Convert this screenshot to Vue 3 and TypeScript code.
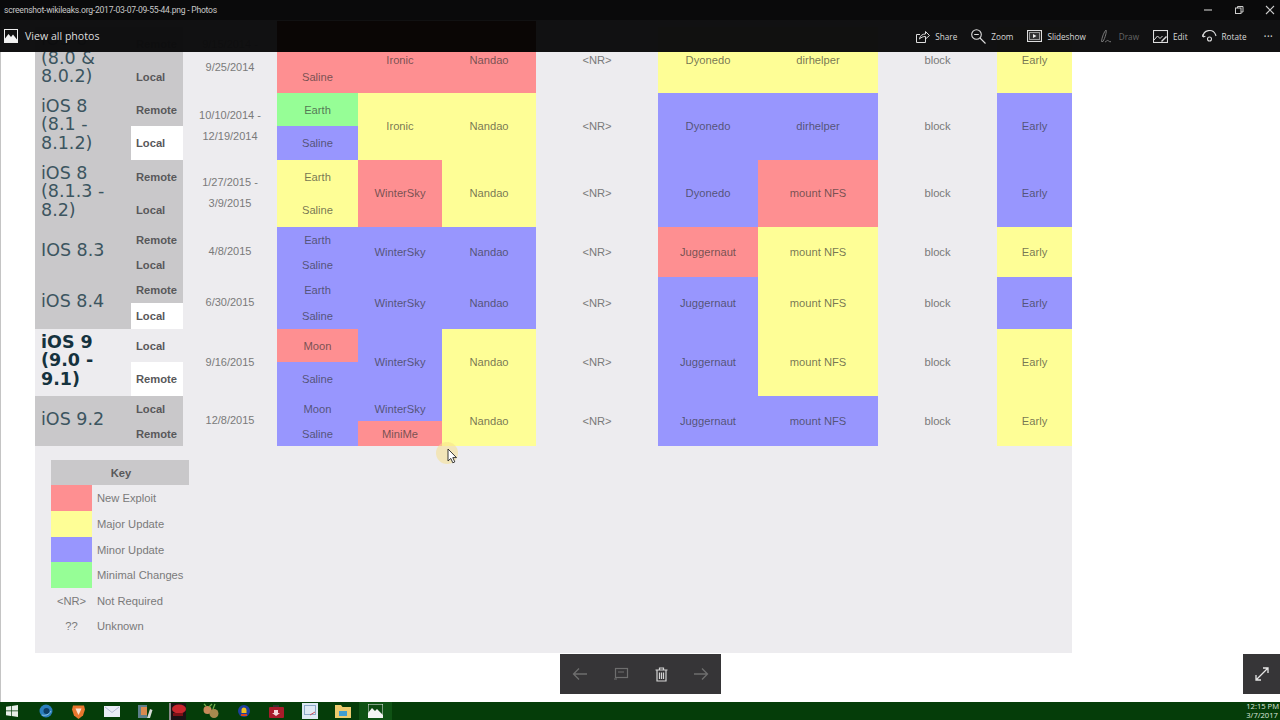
<script setup lang="ts">
type Cell = { t: string; c: string; rs?: number };
type Pair = [string, string];

const pink = 'pink';
const yel = 'yel';
const blue = 'blue';
const green = 'green';

// each os version takes two rows, remote + local
const pair = (
  version: string,
  vCls: string,
  date: string,
  first: Pair,
  second: Pair,
  a: Pair[],
  b: Pair[],
  c: string,
  d: Pair,
  e: Pair,
  f: string,
  h: [number, number],
  dateCls = ''
) => {
  const top: Cell[] = [
    { t: version, c: 'ver ' + vCls, rs: 2 },
    { t: first[0], c: 'type ' + first[1] },
    { t: date, c: 'date ' + dateCls, rs: 2 },
    { t: a[0][0], c: a[0][1], rs: a.length === 1 ? 2 : 1 },
    { t: b[0][0], c: b[0][1], rs: b.length === 1 ? 2 : 1 },
    { t: 'Nandao', c, rs: 2 },
    { t: '<NR>', c: 'plain', rs: 2 },
    { t: d[0], c: d[1], rs: 2 },
    { t: e[0], c: e[1], rs: 2 },
    { t: 'block', c: 'plain', rs: 2 },
    { t: 'Early', c: f, rs: 2 }
  ];
  const bottom: Cell[] = [{ t: second[0], c: 'type ' + second[1] }];
  if (a[1]) bottom.push({ t: a[1][0], c: a[1][1] });
  if (b[1]) bottom.push({ t: b[1][0], c: b[1][1] });
  return [
    { h: h[0], cells: top },
    { h: h[1], cells: bottom }
  ];
};

const rows = [
  ...pair('iOS 8\n(8.0 &\n8.0.2)', 'gray', '9/15/2014 -\n9/25/2014', ['Remote', 'gray'], ['Local', 'gray'],
    [['Earth', pink], ['Saline', pink]], [['Ironic', pink]], pink, ['Dyonedo', yel], ['dirhelper', yel], yel, [33, 33], 'first'),
  ...pair('iOS 8\n(8.1 -\n8.1.2)', 'gray', '10/10/2014 -\n12/19/2014', ['Remote', 'gray'], ['Local', 'white'],
    [['Earth', green], ['Saline', blue]], [['Ironic', yel]], yel, ['Dyonedo', blue], ['dirhelper', blue], blue, [33, 34]),
  ...pair('iOS 8\n(8.1.3 -\n8.2)', 'gray', '1/27/2015 -\n3/9/2015', ['Remote', 'gray'], ['Local', 'gray'],
    [['Earth', yel], ['Saline', yel]], [['WinterSky', pink]], yel, ['Dyonedo', blue], ['mount NFS', pink], blue, [33, 34]),
  ...pair('IOS 8.3', 'gray', '4/8/2015', ['Remote', 'gray'], ['Local', 'gray'],
    [['Earth', blue], ['Saline', blue]], [['WinterSky', blue]], blue, ['Juggernaut', pink], ['mount NFS', yel], yel, [25, 25]),
  ...pair('iOS 8.4', 'gray', '6/30/2015', ['Remote', 'gray'], ['Local', 'white'],
    [['Earth', blue], ['Saline', blue]], [['WinterSky', blue]], blue, ['Juggernaut', blue], ['mount NFS', yel], blue, [26, 26]),
  ...pair('iOS 9\n(9.0 -\n9.1)', 'bold', '9/16/2015', ['Local', ''], ['Remote', 'white'],
    [['Moon', pink], ['Saline', blue]], [['WinterSky', blue]], yel, ['Juggernaut', blue], ['mount NFS', yel], yel, [33, 34]),
  ...pair('iOS 9.2', 'gray', '12/8/2015', ['Local', 'gray'], ['Remote', 'gray'],
    [['Moon', blue], ['Saline', blue]], [['WinterSky', blue], ['MiniMe', pink]], yel, ['Juggernaut', blue], ['mount NFS', blue], yel, [25, 25])
];

const legend = [
  { sw: pink, t: '', label: 'New Exploit', h: 26 },
  { sw: yel, t: '', label: 'Major Update', h: 26 },
  { sw: blue, t: '', label: 'Minor Update', h: 25 },
  { sw: green, t: '', label: 'Minimal Changes', h: 26 },
  { sw: 'plain', t: '<NR>', label: 'Not Required', h: 25 },
  { sw: 'plain', t: '??', label: 'Unknown', h: 26 }
];
</script>

<template>
  <div class="screen">
    <div class="viewer">
      <div class="panel">
        <table class="matrix">
          <colgroup>
            <col v-for="w in [96, 52, 94, 81, 84, 94, 122, 100, 120, 119, 75]" :key="w" :style="{ width: w + 'px' }" />
          </colgroup>
          <tbody>
            <tr v-for="(row, i) in rows" :key="i" :style="{ height: row.h + 'px' }">
              <td v-for="(cell, j) in row.cells" :key="j" :class="cell.c" :rowspan="cell.rs || 1">{{ cell.t }}</td>
            </tr>
          </tbody>
        </table>

        <table class="legend">
          <colgroup>
            <col class="col-swatch" />
            <col />
          </colgroup>
          <thead>
            <tr>
              <th colspan="2">Key</th>
            </tr>
          </thead>
          <tbody>
            <tr v-for="item in legend" :key="item.label" :style="{ height: item.h + 'px' }">
              <td class="swatch" :class="item.sw">{{ item.t }}</td>
              <td class="label">{{ item.label }}</td>
            </tr>
          </tbody>
        </table>
      </div>
    </div>

    <!-- photos app chrome, lies over the page -->
    <header class="chrome">
      <div class="ghost"></div>
      <div class="titlebar">
        <span class="title">screenshot-wikileaks.org-2017-03-07-09-55-44.png - Photos</span>
        <div class="winctl">
          <svg width="10" height="10" viewBox="0 0 10 10"><path d="M1 5h8" stroke="#bbb" stroke-width="1.2" /></svg>
          <svg width="10" height="10" viewBox="0 0 10 10" fill="none" stroke="#ccc"><rect x="1.5" y="3" width="5.5" height="5.5" /><path d="M3.5 3V1.5H9V7H7" /></svg>
          <svg width="10" height="10" viewBox="0 0 10 10"><path d="M1 1l8 8M9 1l-8 8" stroke="#ccc" stroke-width="1.1" /></svg>
        </div>
      </div>
      <div class="toolbar">
        <div class="allphotos">
          <svg width="14" height="14" viewBox="0 0 14 14">
            <rect x=".5" y=".5" width="13" height="13" fill="#111" stroke="#eee" />
            <path d="M1 13V9.5L4.5 5 7 8l2-2.500 4 5V13z" fill="#f2f2f2" />
          </svg>
          <span>View all photos</span>
        </div>
        <div class="actions">
          <div class="act">
            <svg width="15" height="15" viewBox="0 0 15 15" fill="none" stroke="#ddd"><path d="M5 5.500H1.500v8h9V10" /><path d="M4.500 10c.5-3.500 3-5 6-5V2.500l4 4-4 3.500V7.500c-2.500 0-4.500.8-6 2.500z" /></svg>
            <span>Share</span>
          </div>
          <div class="act">
            <svg width="15" height="15" viewBox="0 0 15 15" fill="none" stroke="#ddd" stroke-width="1.100"><circle cx="5.500" cy="5.500" r="4.800" /><path d="M3.200 5.500h4.600M9 9l5.500 5.500" /></svg>
            <span>Zoom</span>
          </div>
          <div class="act">
            <svg width="15" height="12" viewBox="0 0 15 12" fill="none" stroke="#ddd"><rect x=".5" y=".5" width="14" height="11" stroke-width="1.200" /><rect x="2.500" y="2.500" width="10" height="7" fill="#333" stroke="#999" /><path d="M6 4l3.500 2L6 8z" fill="#eee" stroke="none" /></svg>
            <span>Slideshow</span>
          </div>
          <div class="act off">
            <svg width="14" height="15" viewBox="0 0 14 15" fill="none" stroke="#777"><path d="M1.500 12.500C2 8 4 3 6 1c1 1.500-1 8-3 11.500zM5 13c1.500-.5 2-2 3-1.500s1 1.500 3 1.200" /></svg>
            <span>Draw</span>
          </div>
          <div class="act">
            <svg width="15" height="13" viewBox="0 0 15 13" fill="none" stroke="#ddd"><rect x=".5" y=".5" width="14" height="12" stroke-width="1.100" /><path d="M1 10l3.500-4L7 8.500 9.500 6" /><path d="M8 11l5-5 1 1-5 5z" fill="#ddd" stroke="none" /></svg>
            <span>Edit</span>
          </div>
          <div class="act">
            <svg width="15" height="15" viewBox="0 0 15 15" fill="none" stroke="#ddd" stroke-width="1.100"><path d="M1 8a6.500 6.500 0 0 1 12.500-2.500L14 7" /><circle cx="7.500" cy="10" r="2" /><path d="M1 8l-.5-2.500M1 8l2.400-.8" /></svg>
            <span>Rotate</span>
          </div>
          <span class="more">···</span>
        </div>
      </div>
    </header>

    <nav class="floatnav">
      <svg width="16" height="14" viewBox="0 0 16 14" fill="none" stroke="#6e6e6e" stroke-width="1.300"><path d="M15 7H1.500M7 1.500L1.500 7 7 12.500" /></svg>
      <svg width="16" height="14" viewBox="0 0 16 14" fill="none" stroke="#6e6e6e" stroke-width="1.200"><rect x="2.500" y="1.500" width="12" height="9" /><path d="M5 5h6M1 12h3" /></svg>
      <svg width="13" height="15" viewBox="0 0 13 15" fill="none" stroke="#d4d4d4" stroke-width="1.200"><path d="M.5 3h12M4.500 3V1h4v2M2 3v11h9V3M4.500 5.500V12M6.500 5.500V12M8.500 5.500V12" /></svg>
      <svg width="16" height="14" viewBox="0 0 16 14" fill="none" stroke="#6e6e6e" stroke-width="1.300"><path d="M1 7h13.500M9 1.500L14.500 7 9 12.500" /></svg>
    </nav>

    <button class="expand" aria-label="Full screen">
      <svg width="14" height="14" viewBox="0 0 14 14" fill="none" stroke="#e6e6e6" stroke-width="1.300"><path d="M1 13L13 1M8 1h5v5M1 8v5h5" /></svg>
    </button>

    <!-- screen recorder pointer -->
    <div class="pointer">
      <svg width="24" height="28" viewBox="0 0 24 28">
        <circle cx="11" cy="11" r="11" fill="#f5e08c" opacity=".55" />
        <path d="M12 7v12l2.800-2.600 2 4.400 2-.9-2-4.300h3.700z" fill="#fff" stroke="#222" stroke-width=".9" />
      </svg>
    </div>

    <footer class="taskbar">
      <div class="start">
        <svg width="12" height="12" viewBox="0 0 12 12" fill="#e8efe8"><path d="M0 1.700L5 1v4.500H0zM5.700.9L12 0v5.500H5.700zM0 6.200h5v4.700l-5-.7zM5.700 6.200H12V12l-6.300-.9z" /></svg>
      </div>
      <div class="slot">
        <svg width="14" height="14" viewBox="0 0 14 14"><circle cx="7" cy="7" r="6.500" fill="#2b7fbd" /><circle cx="7.500" cy="7" r="3" fill="#0f3f66" /><path d="M3 11c3 1 7 0 9-4" stroke="#8fc4e6" fill="none" /></svg>
      </div>
      <div class="slot">
        <svg width="13" height="15" viewBox="0 0 13 15"><path d="M1 1.500h11l1 4-2 6-4.500 3.500L2 11.500 0 5.500z" fill="#e8772e" /><path d="M3.500 4.500h6L8 8 6.500 11 5 8z" fill="#fbe3cf" /></svg>
      </div>
      <div class="slot">
        <svg width="16" height="11" viewBox="0 0 16 11"><rect width="16" height="11" fill="#e9ecf6" /><path d="M1 1l7 5.500L15 1" fill="none" stroke="#b6bbd6" /></svg>
      </div>
      <div class="slot">
        <svg width="16" height="15" viewBox="0 0 16 15"><rect x="1" y="1" width="9" height="13" fill="#5d7f8a" /><rect x="4" y="3" width="6" height="8" fill="#d98a4f" /><path d="M10 14l3-9 2.500 1-2.500 8z" fill="#d8dcd8" /></svg>
      </div>
      <div class="slot">
        <svg width="17" height="17" viewBox="0 0 17 17"><rect width="17" height="17" fill="#1c1214" /><rect width="2" height="17" fill="#8a8a8a" /><ellipse cx="10" cy="6" rx="7" ry="4.500" fill="#c9262c" /><rect x="4" y="10" width="10" height="3" fill="#7d1116" /></svg>
      </div>
      <div class="slot">
        <svg width="16" height="16" viewBox="0 0 16 16"><circle cx="4.500" cy="7" r="4" fill="#c98a5a" /><circle cx="11" cy="10.500" r="4.500" fill="#a88a4e" /><path d="M10 6l2-5M3 3L1 1M6 4l3-3" stroke="#6fae4a" stroke-width="1.300" /></svg>
      </div>
      <div class="slot">
        <svg width="14" height="14" viewBox="0 0 14 14"><circle cx="7" cy="7" r="6" fill="#1d3f9e" /><path d="M4.500 9V6a2.500 2.500 0 0 1 5 0v3z" fill="#f2c21f" /><rect x="4" y="10" width="6" height="2" fill="#d6471f" /></svg>
      </div>
      <div class="slot">
        <svg width="15" height="13" viewBox="0 0 15 13"><rect y="2" width="15" height="11" rx="1" fill="#a81c2a" /><path d="M5 5h4v3h2l-4 3-4-3h2z" fill="#f4d8da" /><rect x="4" width="6" height="2" fill="#333" /></svg>
      </div>
      <div class="slot">
        <svg width="16" height="16" viewBox="0 0 16 16"><rect width="16" height="16" fill="#dfe9f4" /><rect x="2.500" y="2.500" width="11" height="9" fill="none" stroke="#8fa9c9" /><path d="M8 12l5-3" stroke="#d0505a" /></svg>
      </div>
      <div class="slot">
        <svg width="16" height="14" viewBox="0 0 16 14"><path d="M0 1h6l1.500 2H16v11H0z" fill="#eccb6e" /><rect x="4" y="7" width="8" height="5" fill="#3f9dd1" /></svg>
      </div>
      <div class="slot active">
        <svg width="15" height="14" viewBox="0 0 15 14"><rect width="15" height="14" fill="#0d4a12" stroke="#f0f0f0" /><path d="M0 14V9l4-5 3 3 2-2 6 6v3z" fill="#f4f4f4" /></svg>
      </div>
      <div class="clock">12:15 PM<br />3/7/2017</div>
    </footer>
  </div>
</template>

<style scoped>
.screen {
  position: relative;
  width: 1280px;
  height: 720px;
  overflow: hidden;
  display: flex;
  flex-direction: column;
  background: #fff;
  font-family: "Liberation Sans", Arial, sans-serif;
}

.viewer {
  flex: 1;
  min-height: 0;
  padding-left: 35px;
  box-shadow: inset 1px 0 0 #c4c4c4;
}

.panel {
  width: 1037px;
  height: 653px;
  padding-top: 27px;
  box-sizing: border-box;
  background: #edecef;
}

/* --- main table --- */
.matrix {
  width: 1037px;
  table-layout: fixed;
  border-collapse: collapse;
  font-size: 11.2px;
  color: rgba(50, 50, 50, 0.68);
}

.matrix td {
  padding: 0;
  text-align: center;
  vertical-align: middle;
  overflow: hidden;
}

.matrix td[rowspan="2"] {
  padding-bottom: 1px;
}

.pink { background: #fe8f91; }
.yel { background: #fefe96; }
.blue { background: #9896fe; }
.green { background: #96fe96; }
.gray { background: #c9c8ca; }
.white { background: #fff; }

.matrix td.plain {
  color: #7a7a7a;
}

.matrix td.ver {
  padding: 0 0 4px 6px;
  text-align: left;
  white-space: pre-line;
  font-family: "DejaVu Sans", Verdana, sans-serif;
  font-size: 17.5px;
  line-height: 18.5px;
  color: #3c5560;
}

.matrix td.ver.bold {
  font-weight: 700;
  color: #15323e;
}

.matrix td.type {
  padding-left: 5px;
  text-align: left;
  font-weight: 700;
  color: #58585a;
}

.matrix td.date {
  white-space: pre-line;
  font-size: 11px;
  line-height: 21px;
  color: #7a7a7a;
}

.matrix td.date.first {
  padding-bottom: 9px;
  line-height: 23px;
}

/* --- key --- */
.legend {
  width: 138px;
  margin: 14px 0 0 16px;
  border-collapse: collapse;
  table-layout: fixed;
  font-size: 11.2px;
  color: #7a7a7a;
}

.col-swatch {
  width: 41px;
}

.legend th {
  height: 25px;
  padding: 0 0 0 2px;
  background: #c9c8ca;
  color: #58585a;
  font-size: 11.2px;
  font-weight: 700;
}

.legend td {
  padding: 0;
}

.swatch {
  text-align: center;
}

.legend td.label {
  padding-left: 5px;
  white-space: nowrap;
}

/* --- app chrome --- */
.chrome {
  position: absolute;
  top: 0;
  left: 0;
  width: 100%;
  height: 52px;
  background: rgba(12, 12, 13, 0.98);
  color: #ddd;
  font-family: "Open Sans", sans-serif;
}

.ghost {
  position: absolute;
  left: 277px;
  top: 21px;
  width: 259px;
  height: 31px;
  background: #0a0605;
}

.titlebar {
  position: relative;
  height: 20px;
  display: flex;
  align-items: center;
  justify-content: space-between;
  padding-left: 4px;
  background: #0a0a0b;
}

.title {
  font-family: "Roboto", sans-serif;
  font-size: 8.6px;
  letter-spacing: -0.25px;
  color: #c8c8c8;
}

.winctl {
  display: flex;
  gap: 21px;
  padding-right: 5px;
}

.toolbar {
  position: relative;
  height: 32px;
  display: flex;
  align-items: center;
  justify-content: space-between;
  padding: 0 7px 0 4px;
}

.allphotos {
  display: flex;
  align-items: center;
  gap: 7px;
  font-size: 10.6px;
  color: #ddd;
}

.actions {
  display: flex;
  align-items: center;
  gap: 14px;
}

.act {
  display: flex;
  align-items: center;
  gap: 5px;
  font-size: 8.2px;
  color: #d8d8d8;
}

.act.off {
  color: #666;
}

.more {
  margin-left: 3px;
  font-size: 12px;
  color: #ccc;
}

.floatnav {
  position: absolute;
  left: 560px;
  top: 654px;
  width: 161px;
  height: 40px;
  box-sizing: border-box;
  padding: 0 12px;
  display: flex;
  align-items: center;
  justify-content: space-between;
  background: #363537;
}

.expand {
  position: absolute;
  left: 1243px;
  top: 654px;
  width: 37px;
  height: 40px;
  padding: 0;
  border: 0;
  display: flex;
  align-items: center;
  justify-content: center;
  background: #363537;
}

.pointer {
  position: absolute;
  left: 436px;
  top: 442px;
  line-height: 0;
}

/* --- windows taskbar --- */
.taskbar {
  height: 18px;
  flex: none;
  display: flex;
  align-items: center;
  background: #053d09;
}

.start {
  width: 29px;
  padding-left: 6px;
  box-sizing: border-box;
  line-height: 0;
}

.slot {
  width: 33px;
  height: 100%;
  display: flex;
  align-items: center;
  justify-content: center;
}

.slot.active {
  background: #0f5214;
}

.clock {
  margin-left: auto;
  padding-right: 1px;
  white-space: nowrap;
  font-family: "Open Sans", sans-serif;
  font-size: 7.6px;
  line-height: 9px;
  color: #dfe8df;
}
</style>
